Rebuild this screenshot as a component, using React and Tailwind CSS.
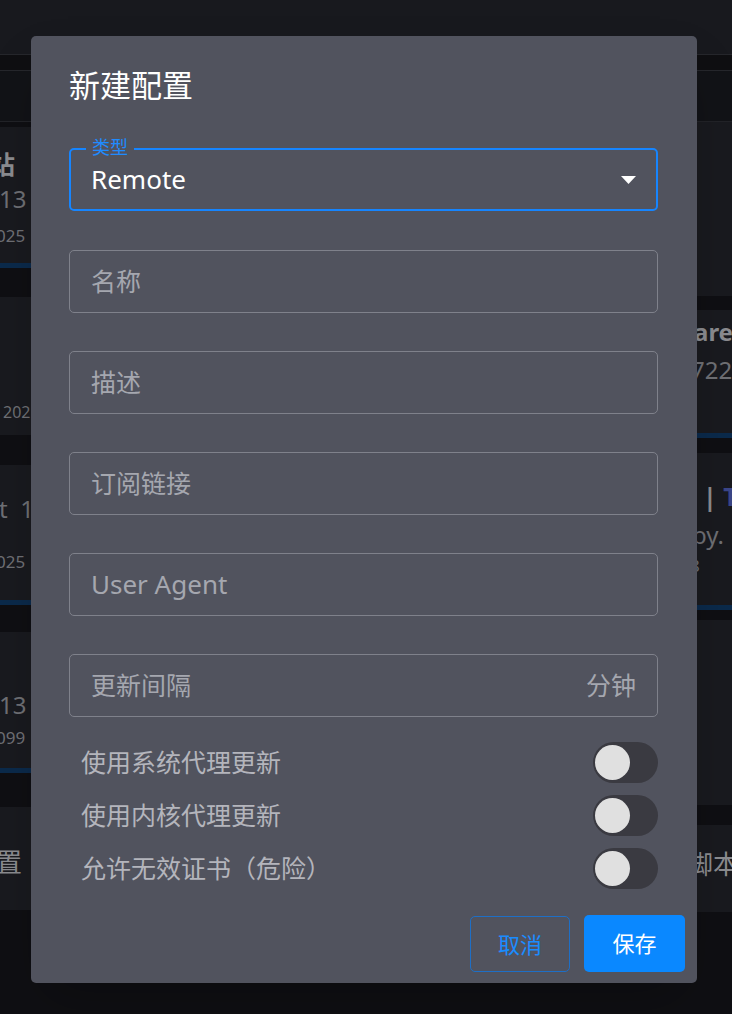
import React from 'react';

const FONT = { fontFamily: '"Noto Sans", "Noto Sans CJK SC", sans-serif' };

const fields = [
  { label: '名称', latin: false },
  { label: '描述', latin: false },
  { label: '订阅链接', latin: false },
  { label: 'User Agent', latin: true },
];
const toggles = ['使用系统代理更新', '使用内核代理更新', '允许无效证书（危险）'];

const Toggle = () => (
  <div className="w-[65px] h-[41px] rounded-full bg-[#3a3a41] flex items-center px-[2px]">
    <div className="w-[35px] h-[35px] rounded-full bg-[#e0e0e0]" />
  </div>
);

const Card = ({ h, children, className = '' }) => (
  <div className={`relative bg-[#191a1f] overflow-hidden ${className}`} style={{ height: h }}>
    {children}
  </div>
);

const Bar = () => <div className="absolute bottom-0 left-0 right-0 h-[5px] bg-[#0b2a4b]" />;

const App = () => {
  return (
    <div className="relative w-[732px] h-[1014px] overflow-hidden bg-[#0f0f13]" style={FONT}>
      {/* background app, dimmed */}
      <div className="h-[54px] bg-[#18191e]" />
      <div className="h-[17px] bg-[#0f0f12] border-t border-b border-[#26272c]" />
      <div className="h-[51px] bg-[#121317] border-b border-[#222328]" />
      <div className="flex justify-between">
        <div className="w-[31px] overflow-hidden flex flex-col pt-[5px] text-[#6f7075] whitespace-nowrap">
          <Card h={141} className="mb-[29px]">
            <div className="-ml-[10px] mt-[20px] text-[25px] font-bold text-[#8b8c90] leading-[34px]">站</div>
            <div className="-ml-[1px] mt-[2px] text-[24px] leading-[32px]">13</div>
            <div className="-ml-[4px] mt-[10px] text-[17px] leading-[22px]">025</div>
            <Bar />
          </Card>
          <Card h={138} className="mb-[30px]">
            <div className="ml-[3px] mt-[104px] text-[16px] leading-[22px]">202</div>
          </Card>
          <Card h={140} className="mb-[27px]">
            <div className="-ml-[1px] mt-[28px] text-[24px] leading-[32px]">t&nbsp;&nbsp;1</div>
            <div className="-ml-[4px] mt-[26px] text-[17px] leading-[22px]">025</div>
            <Bar />
          </Card>
          <Card h={141} className="mb-[34px]">
            <div className="-ml-[1px] mt-[57px] text-[24px] leading-[32px]">13</div>
            <div className="-ml-[4px] mt-[6px] text-[17px] leading-[22px]">099</div>
            <Bar />
          </Card>
          <Card h={103}>
            <div className="-ml-[4px] mt-[38px] text-[26px] leading-[34px] text-[#8b8c90]">置</div>
          </Card>
        </div>
        <div className="w-[35px] overflow-hidden flex flex-col text-[#6f7075] whitespace-nowrap">
          <Card h={174} className="mb-[14px]" />
          <Card h={128} className="mb-[15px]">
            <div className="-ml-[3px] mt-[6px] text-[24px] font-bold leading-[32px] text-[#8b8c90]">are</div>
            <div className="-ml-[6px] mt-[6px] text-[24px] leading-[32px]">722</div>
            <Bar />
          </Card>
          <Card h={157} className="mb-[10px]">
            <div className="ml-[6px] mt-[26px] text-[25px] font-bold leading-[34px] text-[#8b8c90]">| <span className="text-[#3b4689]">T</span></div>
            <div className="-ml-[5px] mt-[6px] text-[24px] leading-[32px]">py.</div>
            <div className="-ml-[7px] mt-[4px] text-[17px] leading-[22px]">8</div>
            <Bar />
          </Card>
          <Card h={185} className="mb-[20px]" />
          <Card h={87}>
            <div className="-ml-[10px] mt-[22px] text-[26px] leading-[34px] text-[#8b8c90]">脚本</div>
          </Card>
        </div>
      </div>

      {/* dialog */}
      <div className="absolute left-[31px] top-[36px] w-[666px] h-[947px] rounded-[5px] bg-[#51535e] shadow-2xl flex flex-col">
        <div className="pl-[38px] pr-[39px] pt-[28px]">
          <h2 className="text-[31px] leading-[42px] text-white">新建配置</h2>

          <div className="relative mt-[42px] h-[63px] rounded-[5px] border-2 border-[#1685ff] flex items-center pl-[20px] pr-[20px]">
            <span className="absolute -top-[14px] left-[15px] px-[6px] bg-[#51535e] text-[18px] leading-[22px] text-[#1f8bff]">类型</span>
            <span className="flex-1 text-[26px] text-white">Remote</span>
            <svg width="15" height="8" viewBox="0 0 15 8">
              <path d="M0 0 L15 0 L7.5 8 Z" fill="#ffffff" />
            </svg>
          </div>

          {fields.map((f, i) => (
            <div
              key={f.label}
              className={`${i === 0 ? 'mt-[39px]' : 'mt-[38px]'} h-[63px] rounded-[5px] border border-[#7f818b] flex items-center px-[21px]`}
            >
              <span className={`${f.latin ? 'text-[26px]' : 'text-[25px]'} text-[#a5a7af]`}>{f.label}</span>
            </div>
          ))}

          <div className="mt-[38px] h-[63px] rounded-[5px] border border-[#7f818b] flex items-center justify-between px-[21px]">
            <span className="text-[25px] text-[#a5a7af]">更新间隔</span>
            <span className="text-[25px] text-[#a5a7af]">分钟</span>
          </div>

          <div className="mt-[25px] flex flex-col gap-[12px]">
            {toggles.map((t) => (
              <div key={t} className="flex items-center justify-between pl-[12px]">
                <span className="text-[25px] text-[#b4b5bc]">{t}</span>
                <Toggle />
              </div>
            ))}
          </div>
        </div>

        <div className="mt-[26px] flex justify-end gap-[14px] pr-[12px]">
          <button className="w-[100px] h-[56px] mt-[1px] rounded-[5px] border border-[#1e6fc6] text-[22px] text-[#1a8cff]">取消</button>
          <button className="w-[101px] h-[57px] rounded-[5px] bg-[#0a88ff] text-[22px] text-white">保存</button>
        </div>
      </div>
    </div>
  );
};

export default App;
